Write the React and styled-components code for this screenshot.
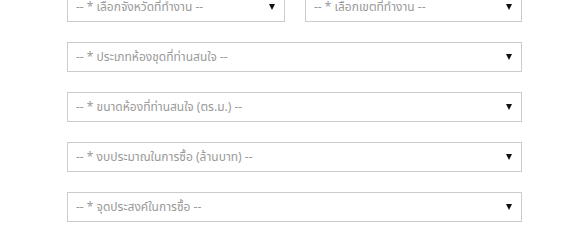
import React from "react";
import styled, { createGlobalStyle } from "styled-components";

const GlobalStyle = createGlobalStyle`
  html, body {
    margin: 0;
    padding: 0;
    background: #ffffff;
  }
  body {
    font-family: "Noto Sans Thai", "Noto Sans", "DejaVu Sans", sans-serif;
  }
`;

const Form = styled.div`
  width: 455px;
  margin: -8px 0 0 67px;
  display: flex;
  flex-direction: column;
  gap: 20px;
`;

const Row = styled.div`
  display: grid;
  grid-template-columns: 218px 217px;
  gap: 20px;
`;

const SelectBox = styled.div`
  box-sizing: border-box;
  height: 30px;
  border: 1px solid #cccccc;
  background: #ffffff;
  display: flex;
  align-items: center;
  justify-content: space-between;
  padding: 0 9px 0 8px;
  color: #9a9a9a;
  font-size: 12px;
  white-space: nowrap;
`;

const Label = styled.span`
  line-height: 28px;
`;

const Arrow = styled.span`
  width: 0;
  height: 0;
  border-left: 3px solid transparent;
  border-right: 3px solid transparent;
  border-top: 6px solid #111111;
  flex-shrink: 0;
`;

const Select = ({ label }) => (
  <SelectBox>
    <Label>{label}</Label>
    <Arrow />
  </SelectBox>
);

const fields = [
  "-- * ประเภทห้องชุดที่ท่านสนใจ --",
  "-- * ขนาดห้องที่ท่านสนใจ (ตร.ม.) --",
  "-- * งบประมาณในการซื้อ (ล้านบาท) --",
  "-- * จุดประสงค์ในการซื้อ --",
];

export default function App() {
  return (
    <>
      <GlobalStyle />
      <Form>
        <Row>
          <Select label="-- * เลือกจังหวัดที่ทำงาน --" />
          <Select label="-- * เลือกเขตที่ทำงาน --" />
        </Row>
        {fields.map((f) => (
          <Select key={f} label={f} />
        ))}
      </Form>
    </>
  );
}
